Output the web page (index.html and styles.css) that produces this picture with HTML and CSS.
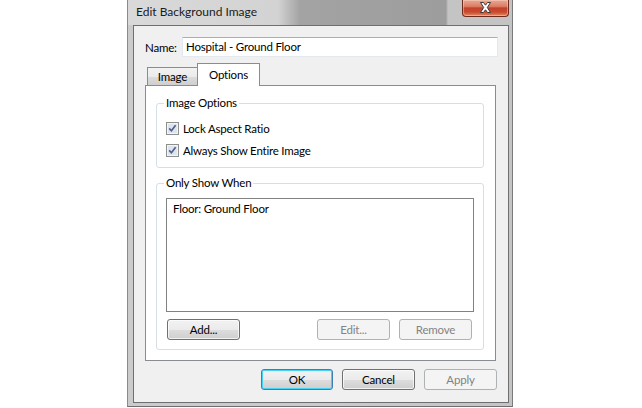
FILE: index.html
```html
<!DOCTYPE html>
<html>
<head>
<meta charset="utf-8">
<link rel="stylesheet" href="styles.css">
</head>
<body>
<div class="page">
  <div class="window">
    <div class="titlebar">
      <span class="title">Edit Background Image</span>
      <div class="close">
        <svg width="13" height="11" viewBox="0 0 13 11"><path d="M1.5 0.5 H4.5 L6.5 3.2 L8.5 0.5 H11.5 L8.3 5.5 L11.5 10.5 H8.5 L6.5 7.8 L4.5 10.5 H1.5 L4.7 5.5 Z" fill="#ffffff" stroke="#3b3b3b" stroke-width="1" stroke-linejoin="round"/></svg>
      </div>
    </div>
    <div class="client">
      <div class="name-row">
        <span class="name-label">Name:</span>
        <div class="textbox">Hospital - Ground Floor</div>
      </div>
      <div class="tabs">
        <div class="tab">Image</div>
        <div class="tab active">Options</div>
      </div>
      <div class="tabpanel">
        <fieldset class="group group-options">
          <legend>Image Options</legend>
          <div class="check-row">
            <span class="checkbox"><svg width="13" height="13" viewBox="0 0 13 13"><rect x="0.5" y="0.5" width="12" height="12" fill="#f4f4f4" stroke="#8e8f8f"/><rect x="2" y="2" width="9" height="9" fill="#dfe3ea"/><path d="M3.2 6.4 L5.4 8.8 L9.6 3.2" fill="none" stroke="#4a5f8f" stroke-width="1.6"/></svg></span>
            <span>Lock Aspect Ratio</span>
          </div>
          <div class="check-row">
            <span class="checkbox"><svg width="13" height="13" viewBox="0 0 13 13"><rect x="0.5" y="0.5" width="12" height="12" fill="#f4f4f4" stroke="#8e8f8f"/><rect x="2" y="2" width="9" height="9" fill="#dfe3ea"/><path d="M3.2 6.4 L5.4 8.8 L9.6 3.2" fill="none" stroke="#4a5f8f" stroke-width="1.6"/></svg></span>
            <span>Always Show Entire Image</span>
          </div>
        </fieldset>
        <fieldset class="group group-when">
          <legend>Only Show When</legend>
          <div class="listbox">
            <div class="list-item">Floor: Ground Floor</div>
          </div>
          <div class="list-buttons">
            <div class="btn">Add...</div>
            <div class="spacer"></div>
            <div class="btn disabled">Edit...</div>
            <div class="btn disabled">Remove</div>
          </div>
        </fieldset>
      </div>
      <div class="dialog-buttons">
        <div class="btn default">OK</div>
        <div class="btn">Cancel</div>
        <div class="btn disabled">Apply</div>
      </div>
    </div>
  </div>
</div>
</body>
</html>
```

FILE: styles.css
```css
* { box-sizing: border-box; }
html, body { margin: 0; padding: 0; background: #ffffff; }
body {
  font-family: "Lato", "Noto Sans", sans-serif;
  font-size: 11.5px;
  letter-spacing: -0.2px;
  color: #000;
}
.page {
  width: 642px;
  height: 408px;
  padding-left: 127px;
  display: flex;
  align-items: flex-start;
}
.window {
  width: 386px;
  height: 407px;
  border-left: 1px solid #8a8a8a;
  border-right: 1px solid #7a7a7a;
  border-bottom: 1px solid #6e6e6e;
  padding: 0 3px 3px 5px;
  background: linear-gradient(to right, #cbcbcb 0, #cbcbcb 50%, #c4c4c4 100%);
  display: flex;
  flex-direction: column;
}
.titlebar {
  height: 25px;
  margin: 0 -3px 0 -5px;
  padding-left: 8px;
  background: linear-gradient(to right, #d9d9d9 0, #d3d3d3 150px, #a3a3a3 172px, #9d9d9d 318px, #c4c4c4 320px, #c4c4c4 100%);
  display: flex;
  align-items: flex-start;
  position: relative;
}
.title {
  line-height: 24px;
  font-size: 12px;
  letter-spacing: 0;
  color: #1a1a1a;
}
.close {
  position: absolute;
  left: 334px;
  top: 0;
  width: 47px;
  height: 17px;
  border: 1px solid #6e2a1d;
  border-top: none;
  border-radius: 0 0 4px 4px;
  background: linear-gradient(to bottom, #e9a894 0, #dc7d66 40%, #c4402a 50%, #c94a2e 75%, #e08a66 100%);
  box-shadow: inset 0 0 0 1px rgba(255,220,200,0.45);
  display: flex;
  align-items: center;
  justify-content: center;
}
.close svg { display: block; margin-top: -1px; }
.client {
  flex: 1;
  background: #f0f0f0;
  border: 1px solid #6f6f6f;
  padding: 11px 10px 0 11px;
  display: flex;
  flex-direction: column;
}
.name-row {
  display: flex;
  align-items: center;
  height: 20px;
}
.name-label {
  width: 37px;
}
.textbox {
  width: 316px;
  height: 20px;
  background: #fff;
  border: 1px solid #e3e9ef;
  border-top-color: #abadb3;
  padding-left: 3px;
  line-height: 17px;
}
.tabs {
  display: flex;
  align-items: flex-end;
  margin-top: 6px;
  padding-left: 2px;
  height: 22px;
  position: relative;
  z-index: 1;
}
.tab {
  height: 18px;
  width: 51px;
  border: 1px solid #898c95;
  border-bottom: none;
  background: linear-gradient(to bottom, #f2f2f2 0, #ebebeb 50%, #dcdcdc 51%, #cfcfcf 100%);
  text-align: center;
  line-height: 18px;
  margin-right: -1px;
}
.tab.active {
  height: 23px;
  width: 63px;
  background: #ffffff;
  margin-bottom: -1px;
  line-height: 21px;
}
.tabpanel {
  width: 351px;
  height: 276px;
  background: #ffffff;
  border: 1px solid #898c95;
  padding: 0 11px 0 10px;
  display: flex;
  flex-direction: column;
}
.group {
  margin: 0;
  border: 1px solid #d5dfe5;
  border-radius: 3px;
  padding: 0 9px 0 9px;
  min-width: 0;
}
.group legend {
  padding: 0 2px;
  margin-left: -2px;
  line-height: 16px;
}
.group-options {
  margin-top: 9px;
  height: 73px;
  padding-top: 11px;
}
.check-row {
  display: flex;
  align-items: center;
  height: 13px;
  margin-bottom: 9px;
}
.checkbox {
  width: 13px;
  height: 13px;
  margin-right: 4px;
  display: block;
}
.checkbox svg { display: block; }
.group-when {
  margin-top: 7px;
  height: 175px;
  padding-top: 7px;
}
.listbox {
  height: 114px;
  border: 1px solid #828282;
  background: #fff;
  padding: 2px 6px;
}
.list-item {
  line-height: 15px;
}
.list-buttons {
  display: flex;
  margin-top: 7px;
  gap: 9px;
  padding-left: 1px;
  padding-right: 2px;
}
.spacer { flex: 1; }
.btn {
  width: 73px;
  height: 21px;
  border: 1px solid #707070;
  border-radius: 3px;
  background: linear-gradient(to bottom, #f2f2f2 0, #ebebeb 50%, #dddddd 51%, #cfcfcf 100%);
  box-shadow: inset 0 0 0 1px rgba(255,255,255,0.7);
  text-align: center;
  line-height: 19px;
}
.btn.disabled {
  border-color: #adb2b5;
  background: #f4f4f4;
  color: #838383;
  box-shadow: none;
}
.btn.default {
  border-color: #3c7fb1;
  box-shadow: inset 0 0 0 1px #48d0f5;
}
.dialog-buttons {
  display: flex;
  justify-content: flex-end;
  gap: 9px;
  margin-top: 8px;
  padding-right: 1px;
}
.dialog-buttons .btn:first-child { width: 72px; }
```
